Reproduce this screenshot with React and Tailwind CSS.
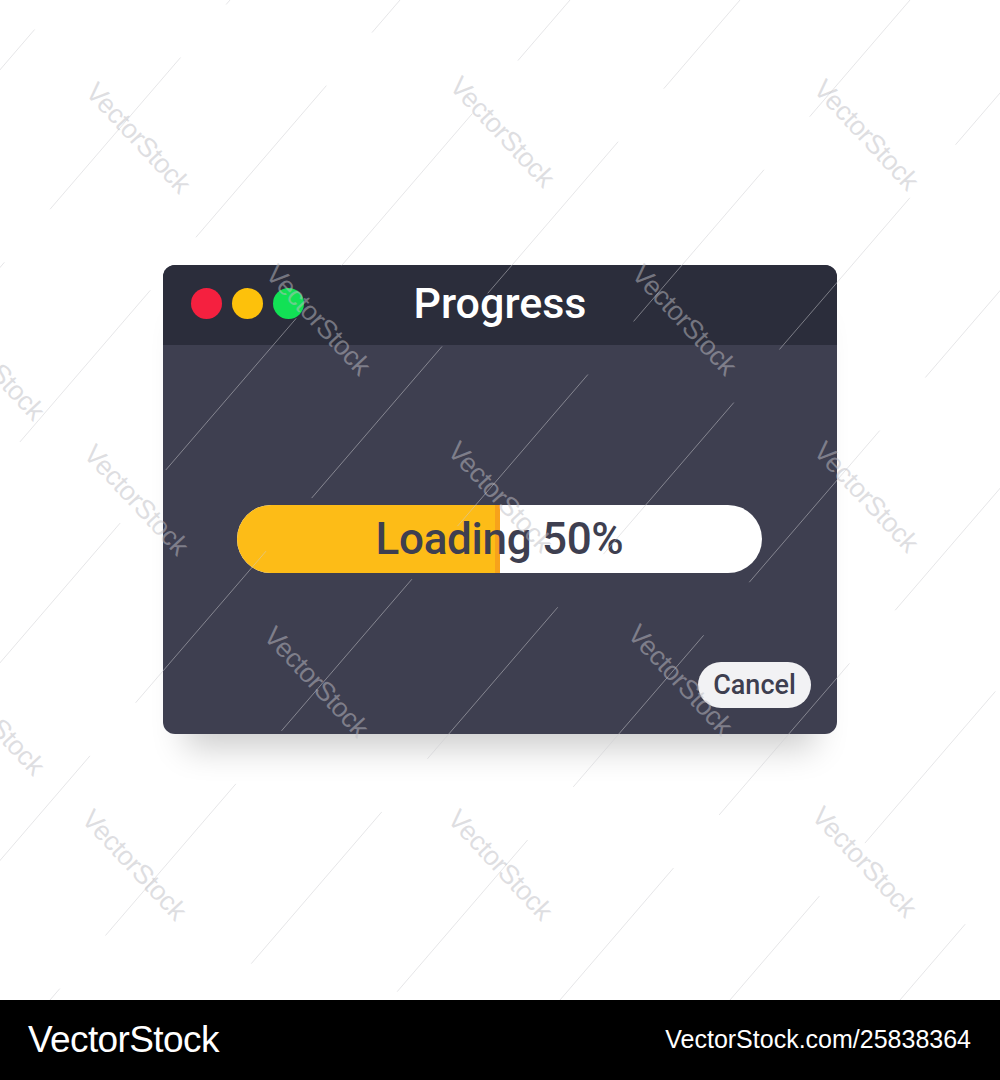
const MARKS = [
  [138, 138], [502, 132], [866, 135],
  [318, 320], [684, 320], [-8, 365],
  [136, 500], [500, 497], [866, 497],
  [316, 682], [680, 680], [-8, 720],
  [134, 865], [500, 865], [864, 862],
];

// thin diagonal strokes that run across the whole sheet
const STROKES = Array.from({ length: 18 }, (_, i) => {
  const x = -800 + i * 170;
  return { x1: x, y1: 1000, x2: x + 860, y2: 0 };
});

function Watermark() {
  return (
    <div className="pointer-events-none absolute inset-0 overflow-hidden">
      <svg className="absolute inset-0" width="1000" height="1000">
        {STROKES.map((s, i) => (
          <line
            key={i}
            x1={s.x1}
            y1={s.y1}
            x2={s.x2}
            y2={s.y2}
            stroke="rgba(205,205,210,0.5)"
            strokeWidth="1"
            strokeDasharray="200 70"
            strokeDashoffset={i * 37}
          />
        ))}
      </svg>
      {MARKS.map(([x, y], i) => (
        <span
          key={i}
          className="absolute -translate-x-1/2 -translate-y-1/2 rotate-[47deg] whitespace-nowrap font-['Liberation_Sans',sans-serif] text-[27px] tracking-[-0.5px] text-[rgba(190,190,196,0.5)]"
          style={{ left: x, top: y }}
        >
          VectorStock
        </span>
      ))}
    </div>
  );
}

export default function App() {
  return (
    <div className="w-[1000px] h-[1080px] bg-white flex flex-col font-['Roboto',sans-serif]">
      <div className="relative h-[1000px] pt-[265px] pl-[163px]">
        <div className="w-[674px] h-[469px] rounded-[12px] overflow-hidden bg-[#3e3f50] shadow-[0_36px_32px_-22px_rgba(0,0,0,0.2)] flex flex-col">
          <div className="relative h-[80px] bg-[#2b2d3b] flex items-center justify-center">
            <div className="absolute left-[28px] top-[23px] flex gap-[10px]">
              <span className="w-[31px] h-[31px] rounded-full bg-[#f5203f]" />
              <span className="w-[31px] h-[31px] rounded-full bg-[#fdc10b]" />
              <span className="w-[31px] h-[31px] rounded-full bg-[#12e155]" />
            </div>
            <span className="text-white text-[43px] font-medium leading-none -mt-[4px]">Progress</span>
          </div>
          <div className="flex-1 flex flex-col px-[74px] pt-[160px]">
            <div className="relative w-[525px] h-[68px] rounded-full bg-white overflow-hidden flex items-center justify-center">
              <div className="absolute left-0 top-0 h-full w-[263px] bg-[#fdbc17] border-r-[5px] border-[#f7a21b]" />
              <span className="relative text-[#3e3f50] text-[44px] font-medium leading-none tracking-[-0.3px]">Loading 50%</span>
            </div>
          </div>
          <div className="flex justify-end pr-[26px] pb-[26px]">
            <button className="w-[113px] h-[46px] rounded-full bg-[#f2f2f4] text-[#3e3f50] text-[27px] font-medium leading-none">
              Cancel
            </button>
          </div>
        </div>
        <Watermark />
      </div>
      <div className="h-[80px] bg-black flex items-center justify-between pl-[28px] pr-[29px] font-['Liberation_Sans',sans-serif] text-white">
        <span className="text-[37px] tracking-[-0.6px]">VectorStock</span>
        <span className="text-[25px]">VectorStock.com/25838364</span>
      </div>
    </div>
  );
}
